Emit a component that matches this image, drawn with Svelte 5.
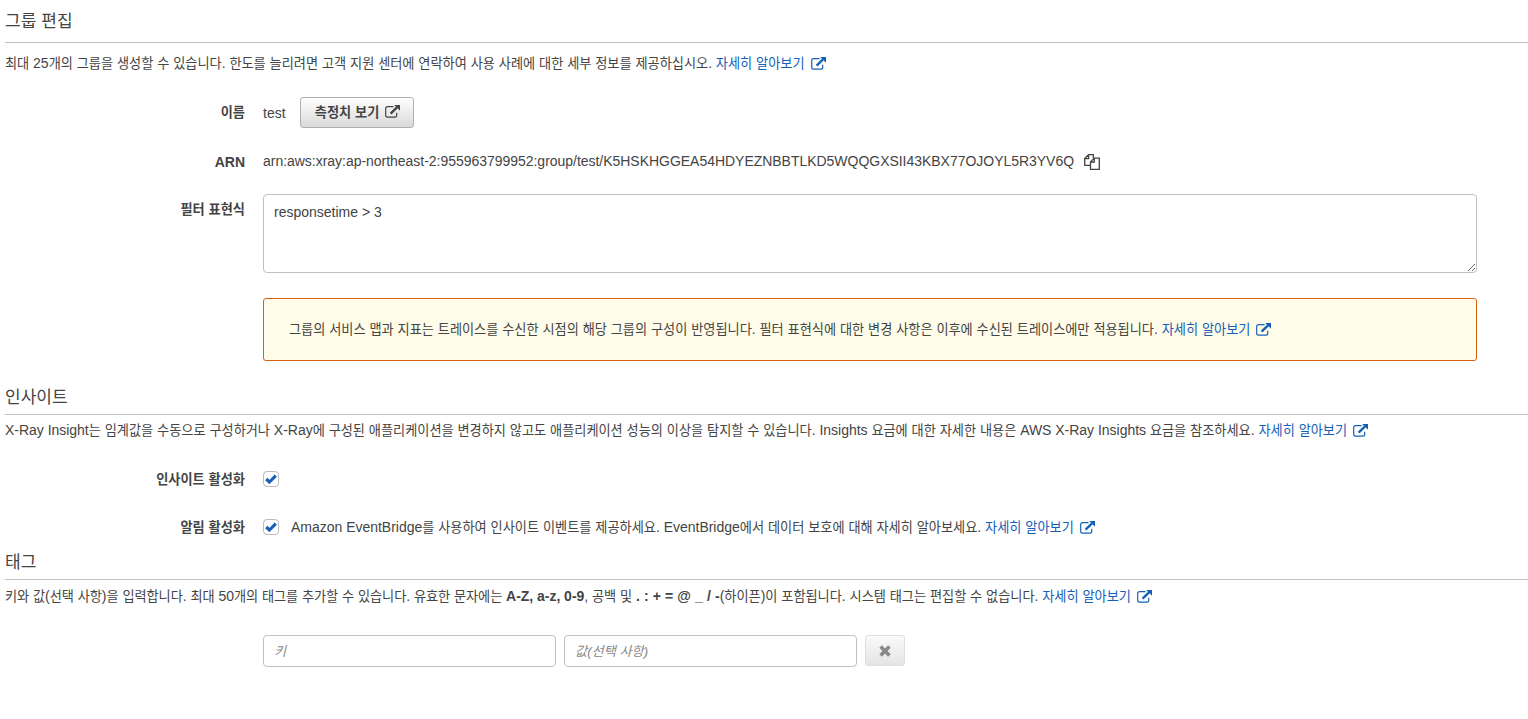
<script>
  const learnMore = '자세히 알아보기';
  let filter = $state('responsetime > 3');
  let insights = $state(true);
  let notifications = $state(true);

  const runs = (text) =>
    (text.match(/[\uAC00-\uD7A3]+|[^\uAC00-\uD7A3]+/g) ?? []).map((value) => ({
      value,
      hangul: /[\uAC00-\uD7A3]/.test(value)
    }));
</script>

{#snippet t(text)}{#each runs(text) as run}{#if run.hangul}<span class="ko">{run.value}</span>{:else}{run.value}{/if}{/each}{/snippet}

{#snippet external()}
  <svg class="ext" width="15" height="13" viewBox="0 0 15 13" aria-hidden="true">
    <path d="M8.6 1.6H2.6Q.7 1.6 .7 3.5V10.3Q.7 12.2 2.6 12.2H9.8Q11.7 12.2 11.7 10.3V7.8" fill="none" stroke="currentColor" stroke-width="1.2" />
    <path d="M5.6 8.6L12 2.4" fill="none" stroke="currentColor" stroke-width="2.3" />
    <path d="M9.2 0H15V5.8Z" fill="currentColor" />
  </svg>
{/snippet}

{#snippet link()}<a href="#more">{@render t(learnMore)}{@render external()}</a>{/snippet}

{#snippet check()}
  <svg width="12" height="10" viewBox="0 0 12 10" aria-hidden="true">
    <path d="M1.2 5L4.4 8L10.8 1.7" fill="none" stroke="#1560b7" stroke-width="3.1" />
  </svg>
{/snippet}

<main>
  <h2 class="first"><span>{@render t('그룹 편집')}</span></h2>
  <p class="intro top">
    <span>{@render t('최대 25개의 그룹을 생성할 수 있습니다. 한도를 늘리려면 고객 지원 센터에 연락하여 사용 사례에 대한 세부 정보를 제공하십시오. ')}{@render link()}</span>
  </p>

  <div class="row name">
    <span class="label">{@render t('이름')}</span>
    <span class="value">test</span>
    <button class="metrics">{@render t('측정치 보기')}{@render external()}</button>
  </div>

  <div class="row arn">
    <span class="label">ARN</span>
    <span class="value arn-text">arn:aws:xray:ap-northeast-2:955963799952:group/test/K5HSKHGGEA54HDYEZNBBTLKD5WQQGXSII43KBX77OJOYL5R3YV6Q</span>
    <svg class="copy" width="16" height="16" viewBox="0 0 16 16" fill="none" stroke="#444" stroke-width="1.3" aria-hidden="true">
      <path d="M9.3 4V.7H4.5L.7 4.5V11.3H6.3M4.6 .7V4.6H.7" />
      <path d="M10.2 4.2H15.3V15.3H6.5V7.9ZM10.3 4.2V8H6.5" />
    </svg>
  </div>

  <div class="row filter">
    <span class="label">{@render t('필터 표현식')}</span>
    <textarea bind:value={filter} spellcheck="false"></textarea>
  </div>

  <div class="alert">
    <span>{@render t('그룹의 서비스 맵과 지표는 트레이스를 수신한 시점의 해당 그룹의 구성이 반영됩니다. 필터 표현식에 대한 변경 사항은 이후에 수신된 트레이스에만 적용됩니다. ')}{@render link()}</span>
  </div>

  <h2><span>{@render t('인사이트')}</span></h2>
  <p class="intro">
    <span>{@render t('X-Ray Insight는 임계값을 수동으로 구성하거나 X-Ray에 구성된 애플리케이션을 변경하지 않고도 애플리케이션 성능의 이상을 탐지할 수 있습니다. Insights 요금에 대한 자세한 내용은 AWS X-Ray Insights 요금을 참조하세요. ')}{@render link()}</span>
  </p>

  <div class="row insights">
    <span class="label">{@render t('인사이트 활성화')}</span>
    <button class="box" role="checkbox" aria-checked={insights} aria-label="인사이트 활성화" onclick={() => (insights = !insights)}>
      {#if insights}{@render check()}{/if}
    </button>
  </div>
  <div class="row notify">
    <span class="label">{@render t('알림 활성화')}</span>
    <button class="box" role="checkbox" aria-checked={notifications} aria-label="알림 활성화" onclick={() => (notifications = !notifications)}>
      {#if notifications}{@render check()}{/if}
    </button>
    <span class="note">{@render t('Amazon EventBridge를 사용하여 인사이트 이벤트를 제공하세요. EventBridge에서 데이터 보호에 대해 자세히 알아보세요. ')}{@render link()}</span>
  </div>

  <h2 class="tags-title"><span>{@render t('태그')}</span></h2>
  <p class="intro tags">
    <span><span class="lead">{@render t('키와 값(선택 사항)을 입력합니다. 최대 50개의 태그를 추가할 수 있습니다. 유효한 문자에는 ')}</span><b>A-Z, a-z, 0-9</b>{@render t(', 공백 및 ')}<b class="symbols">. : + = @ _ / -</b>{@render t('(하이픈)이 포함됩니다. 시스템 태그는 편집할 수 없습니다. ')}{@render link()}</span>
  </p>

  <div class="tag-row">
    <input placeholder="키" aria-label="키" />
    <input placeholder="값(선택 사항)" aria-label="값(선택 사항)" />
    <button class="remove" aria-label="삭제">
      <svg width="12" height="12" viewBox="0 0 12 12" aria-hidden="true">
        <path d="M1.6 1.6L10.4 10.4M10.4 1.6L1.6 10.4" stroke="#888" stroke-width="3.6" />
      </svg>
    </button>
  </div>
</main>

<style>
  :global(body) {
    margin: 0;
    background: #fff;
    overflow: hidden;
  }
  main {
    box-sizing: border-box;
    height: 719px;
    padding-left: 5px;
    color: #444;
    font: 14px/20px 'Liberation Sans', 'Noto Sans CJK KR', sans-serif;
    white-space: nowrap;
  }
  button, input, textarea {
    box-sizing: border-box;
    margin: 0;
    color: #444;
    font: inherit;
  }
  .ko {
    font-family: 'Noto Sans CJK KR', sans-serif;
    font-size: 13.2px;
    line-height: 1;
  }
  h2 {
    box-sizing: border-box;
    display: flex;
    align-items: center;
    height: 35px;
    margin: 19px 0 0;
    border-bottom: 1px solid #c1c1c1;
    font-size: 18px;
    font-weight: 400;
  }
  h2 .ko {
    font-size: 17px;
  }
  h2.first {
    height: 43px;
    margin: 0;
  }
  h2.tags-title {
    margin: 0;
  }
  .intro {
    display: flex;
    align-items: center;
    height: 30px;
    margin: 0;
    letter-spacing: -0.023px;
  }
  .intro.top {
    height: 40px;
  }
  .intro.tags {
    height: 32px;
    letter-spacing: -0.03px;
  }
  .lead {
    letter-spacing: -0.06px;
  }
  b {
    font-weight: 700;
  }
  .symbols {
    letter-spacing: 0.1px;
  }
  a {
    color: #1560b7;
    text-decoration: none;
  }
  .ext {
    margin-left: 6px;
    vertical-align: -2px;
  }
  .row {
    box-sizing: border-box;
    display: flex;
    align-items: center;
  }
  .label {
    flex: none;
    width: 240px;
    margin-right: 18px;
    font-weight: 700;
    text-align: right;
  }
  .name {
    height: 59px;
  }
  .name .label {
    padding-bottom: 2px;
  }
  .metrics {
    height: 31px;
    width: 114px;
    margin-left: 14px;
    padding: 0 0 1px 2px;
    border: 1px solid #b0b0b0;
    border-radius: 3px;
    background: linear-gradient(#fff, #d9d9d9);
    font-weight: 700;
  }
  .metrics .ext {
    vertical-align: -1px;
  }
  .arn {
    height: 39px;
  }
  .arn-text {
    padding-bottom: 2px;
    letter-spacing: -0.028px;
  }
  .copy {
    margin-left: 10px;
  }
  .filter {
    height: 92px;
    padding-top: 13px;
    align-items: flex-start;
  }
  .filter .label {
    padding-top: 5px;
  }
  textarea {
    display: block;
    width: 1214px;
    height: 79px;
    padding: 7px 10px;
    border: 1px solid #c1c1c1;
    border-radius: 4px;
    outline: none;
    resize: both;
  }
  .alert {
    box-sizing: border-box;
    display: flex;
    align-items: center;
    width: 1214px;
    height: 63px;
    margin: 25px 0 0 258px;
    padding: 0 0 2px 25px;
    border: 1px solid #df5e16;
    border-radius: 3px;
    background: #fffce9;
    letter-spacing: -0.02px;
  }
  .insights {
    height: 48px;
    margin-top: 10px;
  }
  .notify {
    height: 42px;
    padding-top: 6px;
  }
  .box {
    display: flex;
    align-items: center;
    justify-content: center;
    width: 16px;
    height: 16px;
    padding: 0;
    border: 1px solid #bbb;
    border-radius: 4px;
    background: #fff;
  }
  .note {
    margin-left: 12px;
    letter-spacing: -0.015px;
  }
  .tag-row {
    display: flex;
    gap: 8px;
    margin: 23px 0 0 258px;
  }
  input {
    width: 293px;
    height: 32px;
    padding: 0 10px 1px;
    border: 1px solid #c1c1c1;
    border-radius: 4px;
    outline: none;
  }
  input::placeholder {
    color: #888;
    font-size: 13.2px;
    font-style: italic;
    opacity: 1;
  }
  .remove {
    display: flex;
    align-items: center;
    justify-content: center;
    width: 40px;
    height: 31px;
    padding: 0;
    border: 1px solid #dedede;
    border-radius: 3px;
    background: linear-gradient(#fafafa, #e4e4e4);
  }
</style>
